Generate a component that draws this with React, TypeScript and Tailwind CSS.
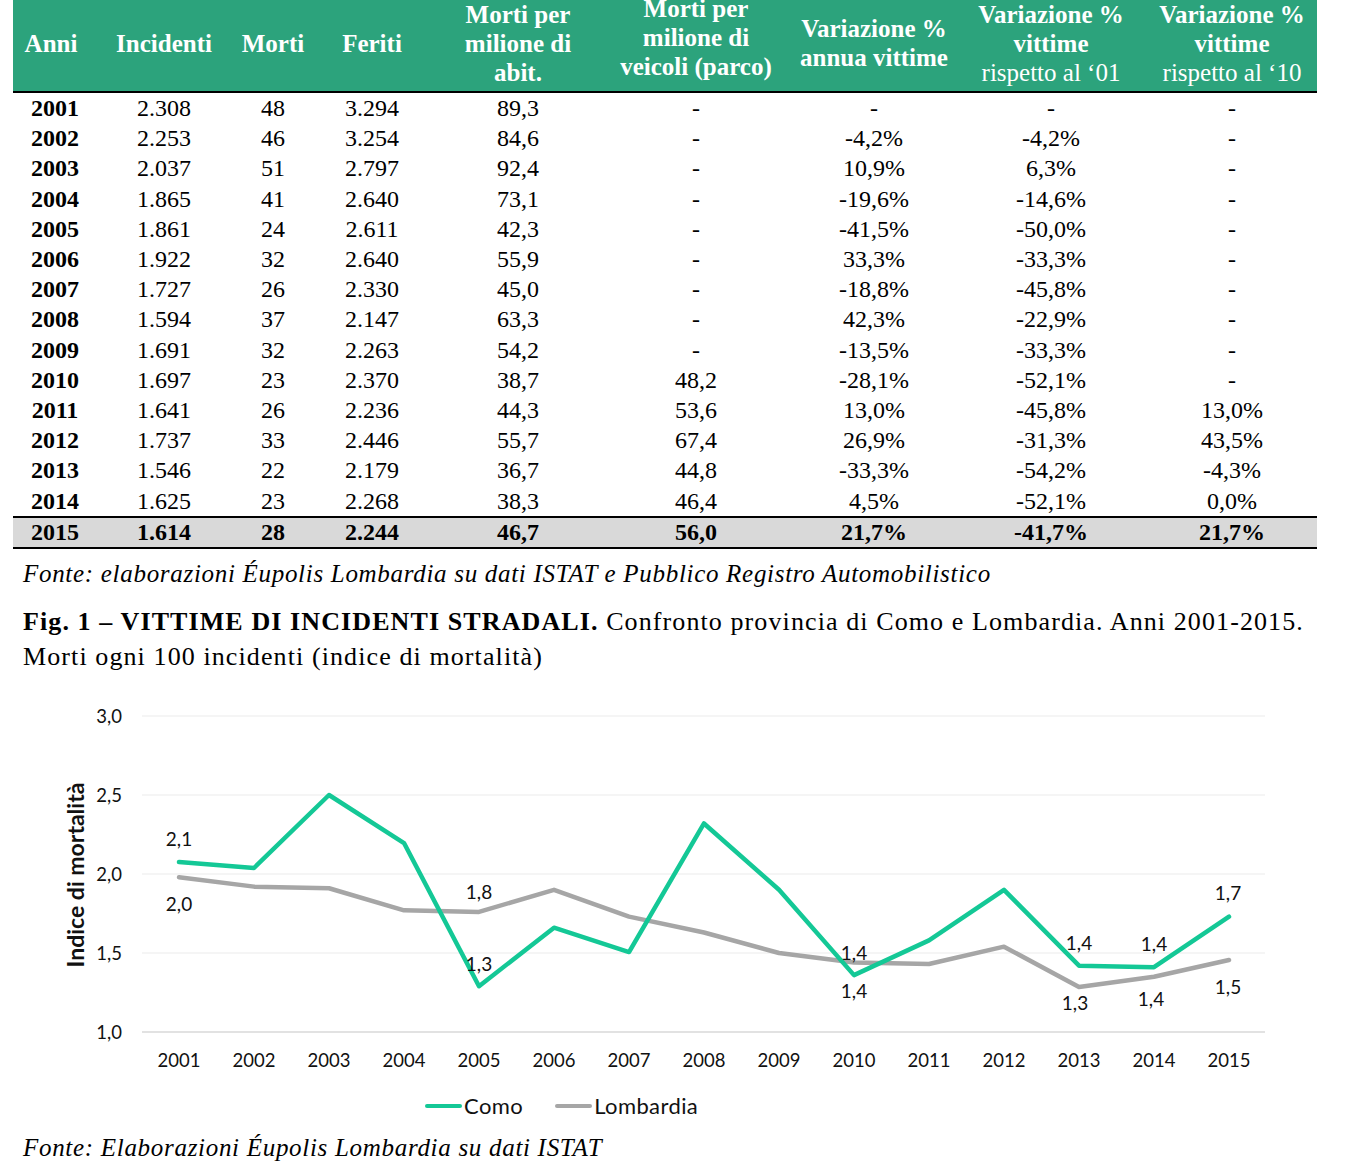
const serif = { fontFamily: '"Liberation Serif", "Times New Roman", serif' };

const cols = "grid grid-cols-[76px_150px_68px_130px_162px_194px_162px_192px_170px]";

const rows: string[][] = [
  ["2001", "2.308", "48", "3.294", "89,3", "-", "-", "-", "-"],
  ["2002", "2.253", "46", "3.254", "84,6", "-", "-4,2%", "-4,2%", "-"],
  ["2003", "2.037", "51", "2.797", "92,4", "-", "10,9%", "6,3%", "-"],
  ["2004", "1.865", "41", "2.640", "73,1", "-", "-19,6%", "-14,6%", "-"],
  ["2005", "1.861", "24", "2.611", "42,3", "-", "-41,5%", "-50,0%", "-"],
  ["2006", "1.922", "32", "2.640", "55,9", "-", "33,3%", "-33,3%", "-"],
  ["2007", "1.727", "26", "2.330", "45,0", "-", "-18,8%", "-45,8%", "-"],
  ["2008", "1.594", "37", "2.147", "63,3", "-", "42,3%", "-22,9%", "-"],
  ["2009", "1.691", "32", "2.263", "54,2", "-", "-13,5%", "-33,3%", "-"],
  ["2010", "1.697", "23", "2.370", "38,7", "48,2", "-28,1%", "-52,1%", "-"],
  ["2011", "1.641", "26", "2.236", "44,3", "53,6", "13,0%", "-45,8%", "13,0%"],
  ["2012", "1.737", "33", "2.446", "55,7", "67,4", "26,9%", "-31,3%", "43,5%"],
  ["2013", "1.546", "22", "2.179", "36,7", "44,8", "-33,3%", "-54,2%", "-4,3%"],
  ["2014", "1.625", "23", "2.268", "38,3", "46,4", "4,5%", "-52,1%", "0,0%"],
];
const total = ["2015", "1.614", "28", "2.244", "46,7", "56,0", "21,7%", "-41,7%", "21,7%"];

const years = Array.from({ length: 15 }, (_, i) => 2001 + i);
const como = [2.076, 2.038, 2.5, 2.196, 1.29, 1.66, 1.506, 2.32, 1.9, 1.36, 1.58, 1.9, 1.42, 1.41, 1.73];
const lomb = [1.98, 1.92, 1.91, 1.77, 1.76, 1.9, 1.73, 1.63, 1.5, 1.44, 1.43, 1.54, 1.285, 1.35, 1.456];

const xAt = (i: number) => 179 + i * 75;
const yAt = (v: number) => 1032 - (v - 1) * 158;
const pts = (d: number[]) => d.map((v, i) => `${xAt(i)},${yAt(v)}`).join(" ");

// data labels, placed as in the source chart
const labels: [number, number, string][] = [
  [179, 838, "2,1"],
  [179, 903, "2,0"],
  [479, 891, "1,8"],
  [479, 963, "1,3"],
  [854, 952, "1,4"],
  [854, 990, "1,4"],
  [1079, 942, "1,4"],
  [1075, 1002, "1,3"],
  [1154, 943, "1,4"],
  [1151, 998, "1,4"],
  [1228, 892, "1,7"],
  [1228, 986, "1,5"],
];

function Table() {
  return (
    <div className="ml-[13px] w-[1304px] text-[24px] text-black" style={serif}>
      <div className={`${cols} grid-rows-[91px] h-[91px] bg-[#2ca37c] font-bold text-[25px] leading-[29px] text-white border-b-2 border-black box-content`}>
        <div className="flex items-center justify-center pb-[5px]">Anni</div>
        <div className="flex items-center justify-center pb-[5px]">Incidenti</div>
        <div className="flex items-center justify-center pb-[5px]">Morti</div>
        <div className="flex items-center justify-center pb-[5px]">Feriti</div>
        <div className="flex items-center justify-center text-center pb-[5px]">
          Morti per<br />milione di<br />abit.
        </div>
        <div className="flex items-center justify-center text-center pb-[17px]">
          <div>
            Morti per<br />milione di<br />veicoli (parco)
          </div>
        </div>
        <div className="flex items-center justify-center text-center pb-[5px]">
          Variazione %<br />annua vittime
        </div>
        <div className="flex items-center justify-center text-center pb-[5px]">
          <div>
            Variazione %<br />vittime<br /><span className="font-normal">rispetto al ‘01</span>
          </div>
        </div>
        <div className="flex items-center justify-center text-center pb-[5px]">
          <div>
            Variazione %<br />vittime<br /><span className="font-normal">rispetto al ‘10</span>
          </div>
        </div>
      </div>
      {rows.map((r) => (
        <div key={r[0]} className={`${cols} h-[30.2px] items-center text-center leading-none`}>
          {r.map((c, j) => (
            <div key={j} className={j === 0 ? "font-bold pl-2" : ""}>
              {c}
            </div>
          ))}
        </div>
      ))}
      <div className={`${cols} h-[29px] items-center text-center leading-none font-bold bg-[#d9d9d9] border-y-2 border-black box-content`}>
        {total.map((c, j) => (
          <div key={j} className={j === 0 ? "pl-2" : ""}>
            {c}
          </div>
        ))}
      </div>
    </div>
  );
}

function Chart() {
  const font = '"Lato", "Open Sans", sans-serif';
  return (
    <svg width={1363} height={400} viewBox="0 690 1363 400" className="block mt-[16px]" fontFamily={font}>
      {[3, 2.5, 2, 1.5].map((v) => (
        <line key={v} x1={142} x2={1265} y1={yAt(v)} y2={yAt(v)} stroke="#ebebeb" strokeWidth={1.2} />
      ))}
      <line x1={142} x2={1265} y1={1032} y2={1032} stroke="#d9d9d9" strokeWidth={1.5} />
      {[3, 2.5, 2, 1.5, 1].map((v) => (
        <text key={v} x={122} y={yAt(v)} textAnchor="end" dominantBaseline="central" fontSize={18.5} fill="#111">
          {v.toFixed(1).replace(".", ",")}
        </text>
      ))}
      {years.map((y, i) => (
        <text key={y} x={xAt(i)} y={1060} textAnchor="middle" dominantBaseline="central" fontSize={18.5} fill="#111">
          {y}
        </text>
      ))}
      <text
        x={75}
        y={875}
        transform="rotate(-90 75 875)"
        textAnchor="middle"
        dominantBaseline="central"
        fontSize={23}
        fontWeight={700}
        fill="#111"
      >
        Indice di mortalità
      </text>
      <polyline points={pts(lomb)} fill="none" stroke="#a6a6a6" strokeWidth={4.5} strokeLinejoin="round" strokeLinecap="round" />
      <polyline points={pts(como)} fill="none" stroke="#14c896" strokeWidth={4.5} strokeLinejoin="round" strokeLinecap="round" />
      {labels.map(([x, y, t], i) => (
        <text key={i} x={x} y={y} textAnchor="middle" dominantBaseline="central" fontSize={19} fill="#111">
          {t}
        </text>
      ))}
    </svg>
  );
}

function Legend() {
  return (
    <div className="flex items-center pl-[425px] h-[32px] text-[22px] tracking-[0.4px] text-[#111]" style={{ fontFamily: '"Lato", sans-serif' }}>
      <span className="w-[37px] h-[4px] rounded-full bg-[#14c896] mr-[2px]" />
      <span>Como</span>
      <span className="w-[37px] h-[4px] rounded-full bg-[#a6a6a6] ml-[32px] mr-[2px]" />
      <span>Lombardia</span>
    </div>
  );
}

export default function App() {
  return (
    <div className="w-[1363px] h-[1163px] bg-white overflow-hidden">
      <Table />
      <p className="ml-[23px] mt-[10px] text-[25px] tracking-[0.7px] italic leading-[30px]" style={serif}>
        Fonte: elaborazioni Éupolis Lombardia su dati ISTAT e Pubblico Registro Automobilistico
      </p>
      <div className="ml-[23px] mt-[15px] text-[26px] tracking-[1.1px] leading-[35px] text-black" style={serif}>
        <p>
          <span className="font-bold">Fig. 1 – VITTIME DI INCIDENTI STRADALI.</span> Confronto provincia di Como e Lombardia. Anni 2001-2015.
        </p>
        <p>Morti ogni 100 incidenti (indice di mortalità)</p>
      </div>
      <Chart />
      <Legend />
      <p className="ml-[23px] mt-[11px] text-[25px] tracking-[0.7px] italic leading-[30px]" style={serif}>
        Fonte: Elaborazioni Éupolis Lombardia su dati ISTAT
      </p>
    </div>
  );
}
